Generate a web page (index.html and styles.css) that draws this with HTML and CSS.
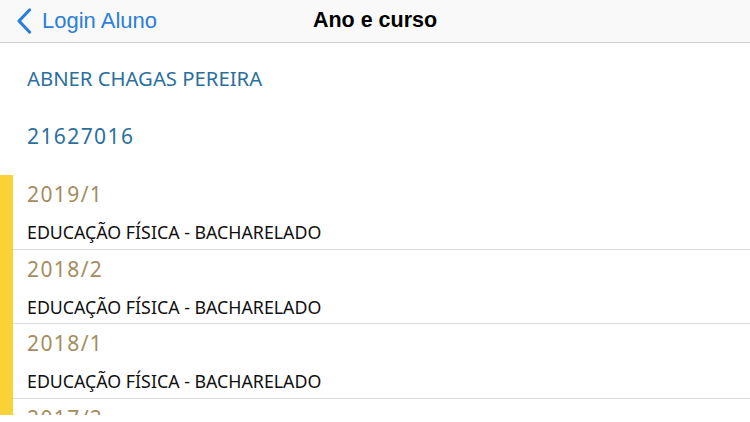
FILE: index.html
```html
<!DOCTYPE html>
<html lang="pt">
<head>
<meta charset="utf-8">
<link rel="stylesheet" href="styles.css">
</head>
<body>
<header class="nav">
  <a class="back">
    <svg class="chev" width="16" height="26" viewBox="0 0 16 26"><path d="M13.5 2 L3 13 L13.5 24" fill="none" stroke="#2a7fd8" stroke-width="3.2" stroke-linecap="round" stroke-linejoin="round"/></svg>
    <span>Login Aluno</span>
  </a>
  <h1 class="title">Ano e curso</h1>
</header>
<section class="info">
  <div class="name">ABNER CHAGAS PEREIRA</div>
  <div class="id">21627016</div>
</section>
<ul class="list">
  <li class="row"><div class="year">2019/1</div><div class="course">EDUCAÇÃO FÍSICA - BACHARELADO</div></li>
  <li class="row"><div class="year">2018/2</div><div class="course">EDUCAÇÃO FÍSICA - BACHARELADO</div></li>
  <li class="row"><div class="year">2018/1</div><div class="course">EDUCAÇÃO FÍSICA - BACHARELADO</div></li>
  <li class="row"><div class="year">2017/2</div><div class="course">EDUCAÇÃO FÍSICA - BACHARELADO</div></li>
</ul>
</body>
</html>
```
FILE: styles.css
```css
html, body { margin: 0; padding: 0; background: #ffffff; }
body { width: 750px; height: 422px; overflow: hidden; font-family: "Noto Sans", "Open Sans", sans-serif; }
.nav {
  height: 42px;
  background: #f9f9f9;
  border-bottom: 1px solid #cfcfd2;
  display: flex;
  align-items: center;
  position: relative;
}
.back {
  display: flex;
  align-items: center;
  padding-left: 16px;
  color: #2a7fd8;
  font-family: "Liberation Sans", Arial, sans-serif;
  font-size: 22px;
  gap: 10px;
}
.chev { display: block; }
.title {
  position: absolute;
  left: 0; right: 0; top: 0;
  margin: 0;
  height: 42px;
  line-height: 40px;
  text-align: center;
  font-family: "Liberation Sans", Arial, sans-serif;
  font-size: 21.5px;
  font-weight: 600;
  color: #000;
}
.info {
  padding: 20px 0 24px 27px;
  display: flex;
  flex-direction: column;
  gap: 28px;
  color: #2b6f9e;
  font-size: 20.3px;
}
.info > div { line-height: 30px; height: 30px; }
.info .id { font-size: 21px; letter-spacing: 1.4px; }
.list {
  list-style: none;
  margin: 0;
  padding: 0;
  height: 240px;
  overflow: hidden;
  border-left: 13px solid #f8d236;
}
.row {
  height: 74.5px;
  box-sizing: border-box;
  border-bottom: 1px solid #dedede;
  padding: 5px 0 0 14px;
}
.year { color: #a48d5f; font-size: 21px; letter-spacing: 1.4px; line-height: 28px; height: 28px; }
.course { color: #111; font-size: 17.8px; line-height: 28px; height: 28px; margin-top: 10px; }
```
